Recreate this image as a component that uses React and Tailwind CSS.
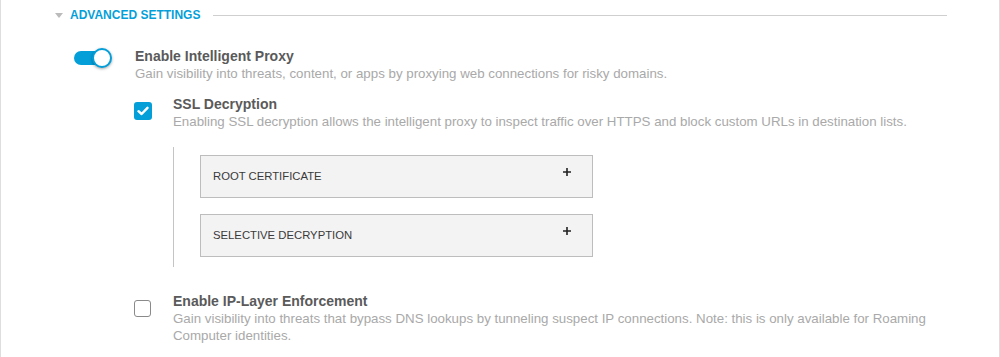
import React from "react";

const Toggle = () => (
  <div className="relative w-[44px] h-[20px]">
    <div className="absolute left-0 top-[3px] w-[30px] h-[14px] rounded-full bg-[#049fd9]"></div>
    <div className="absolute left-[18px] top-[0px] w-[20px] h-[20px] rounded-full bg-white border-2 border-[#049fd9] shadow-[0_1px_3px_rgba(0,0,0,0.35)]"></div>
  </div>
);

const CheckBox = ({ checked }) =>
  checked ? (
    <div className="w-[18px] h-[18px] rounded-[3px] bg-[#049fd9] flex items-center justify-center">
      <svg width="12" height="10" viewBox="0 0 12 10">
        <path d="M1.5 5.2 L4.6 8 L10.5 1.8" fill="none" stroke="white" strokeWidth="2.4" strokeLinecap="round" strokeLinejoin="round" />
      </svg>
    </div>
  ) : (
    <div className="w-[17px] h-[17px] rounded-[3px] border border-[#8a8a8a] bg-white"></div>
  );

const Panel = ({ label }) => (
  <div className="w-[393px] h-[43px] border border-[#bdbdbd] bg-[#f3f3f3] flex items-center pl-[12px] pr-[21px]">
    <span className="flex-1 text-[11.3px] leading-[13px] text-[#3a3a3a] uppercase">{label}</span>
    <svg width="8" height="8" viewBox="0 0 8 8" className="-mt-[9px]">
      <path d="M4 0 V8 M0 4 H8" stroke="#222" strokeWidth="1.6" />
    </svg>
  </div>
);

const App = () => {
  return (
    <div className="w-[1000px] h-[357px] bg-white border-l border-r border-[#dedede] overflow-hidden font-['Liberation_Sans',Arial,sans-serif]">
      {/* Section header */}
      <div className="h-[30px] flex items-center pl-[54px] pr-[52px]">
        <div className="w-0 h-0 border-l-[4px] border-r-[4px] border-t-[5px] border-l-transparent border-r-transparent border-t-[#bbbbbb]"></div>
        <span className="ml-[7px] text-[12px] font-bold text-[#049fd9] uppercase">Advanced Settings</span>
        <div className="flex-1 ml-[13px] h-px bg-[#cfcfcf]"></div>
      </div>

      {/* Intelligent proxy */}
      <div className="flex pl-[73px] mt-[17px]">
        <div className="w-[61px] shrink-0 pt-[1px]">
          <Toggle />
        </div>
        <div>
          <div className="text-[14px] leading-[18px] font-bold text-[#5a5a5a]">Enable Intelligent Proxy</div>
          <div className="text-[13.3px] leading-[17px] text-[#a9a9a9]">
            Gain visibility into threats, content, or apps by proxying web connections for risky domains.
          </div>
        </div>
      </div>

      {/* SSL decryption */}
      <div className="pl-[133px] mt-[13px]">
        <div className="flex">
          <div className="w-[39px] shrink-0 pt-[7px]">
            <CheckBox checked />
          </div>
          <div>
            <div className="text-[14px] leading-[18px] font-bold text-[#5a5a5a]">SSL Decryption</div>
            <div className="text-[13.3px] leading-[17px] text-[#a9a9a9]">
              Enabling SSL decryption allows the intelligent proxy to inspect traffic over HTTPS and block custom URLs in destination lists.
            </div>
          </div>
        </div>
        <div className="ml-[39px] mt-[17px] border-l border-[#c4c4c4] pl-[26px] pt-[8px] pb-[10px] flex flex-col gap-[16px]">
          <Panel label="Root Certificate" />
          <Panel label="Selective Decryption" />
        </div>
      </div>

      {/* IP-layer enforcement */}
      <div className="flex pl-[133px] mt-[26px]">
        <div className="w-[39px] shrink-0 pt-[7px]">
          <CheckBox />
        </div>
        <div className="pr-[60px]">
          <div className="text-[14px] leading-[17px] font-bold text-[#5a5a5a]">Enable IP-Layer Enforcement</div>
          <div className="text-[13.3px] leading-[17px] text-[#a9a9a9]">
            Gain visibility into threats that bypass DNS lookups by tunneling suspect IP connections. Note: this is only available for Roaming Computer identities.
          </div>
        </div>
      </div>
    </div>
  );
};

export default App;
